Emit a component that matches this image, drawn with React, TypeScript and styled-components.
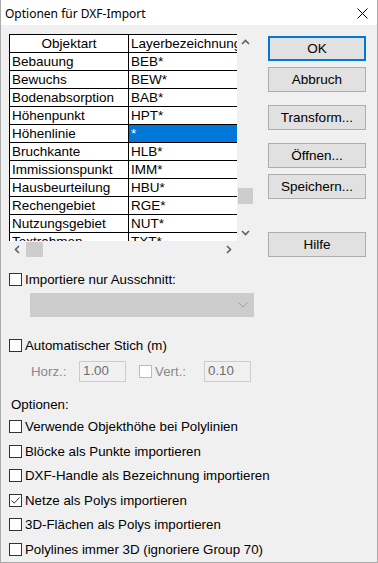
import styled, { createGlobalStyle } from "styled-components";

const Global = createGlobalStyle`
  html, body {
    margin: 0;
    padding: 0;
    background: #ffffff;
  }
  body {
    font-family: "Liberation Sans", Arial, sans-serif;
    font-size: 13.3px;
    color: #000;
  }
`;

const Window = styled.div`
  width: 378px;
  height: 563px;
  box-sizing: border-box;
  background: #f0f0f0;
  border: 1px solid #aaaaaa;
  border-top: none;
  display: flex;
  flex-direction: column;
`;

const TitleBar = styled.div`
  height: 25px;
  box-sizing: border-box;
  background: #fff;
  display: flex;
  align-items: center;
  justify-content: space-between;
  padding: 2px 9px 0 4px;
  font-family: "Noto Sans", "Open Sans", sans-serif;
  font-size: 12px;
`;

const Body = styled.div`
  padding: 9px 0 0 8px;
  display: flex;
  flex-direction: column;
`;

const TopRow = styled.div`
  display: flex;
  align-items: flex-start;
`;

const GridBox = styled.div`
  display: grid;
  grid-template-columns: 228px 17px;
  grid-template-rows: 207px 17px;
  width: 245px;
`;

const Viewport = styled.div`
  background: #fff;
  overflow: hidden;
`;

const Table = styled.div`
  display: grid;
  grid-template-columns: 119px 150px;
  border-top: 1px solid #000;
  border-left: 1px solid #000;
  width: max-content;
`;

const Cell = styled.div<{ $sel?: boolean; $center?: boolean }>`
  height: 18px;
  box-sizing: border-box;
  border-right: 1px solid #000;
  border-bottom: 1px solid #000;
  padding: 0 2px;
  line-height: 17px;
  font-size: 13.5px;
  white-space: nowrap;
  overflow: hidden;
  text-align: ${({ $center }) => ($center ? "center" : "left")};
  background: ${({ $sel }) => ($sel ? "#0078d7" : "#fff")};
  color: ${({ $sel }) => ($sel ? "#fff" : "#000")};
`;

const VScroll = styled.div`
  background: #f0f0f0;
  display: flex;
  flex-direction: column;
`;

const HScroll = styled.div`
  background: #f0f0f0;
  display: flex;
  align-items: stretch;
`;

const Corner = styled.div`
  background: #f0f0f0;
`;

const ArrowBtn = styled.div`
  width: 17px;
  height: 17px;
  flex: none;
  display: flex;
  align-items: center;
  justify-content: center;
`;

const Track = styled.div<{ $offset: number }>`
  flex: 1;
  display: flex;
  flex-direction: column;
  padding-top: ${({ $offset }) => $offset}px;
`;

const VThumb = styled.div`
  width: 15px;
  height: 16px;
  margin-left: 1px;
  background: #cdcdcd;
`;

const HTrack = styled.div`
  flex: 1;
  display: flex;
  align-items: center;
`;

const HThumb = styled.div`
  width: 17px;
  height: 15px;
  background: #cdcdcd;
`;

const ButtonCol = styled.div`
  display: flex;
  flex-direction: column;
  margin: 2px 0 0 14px;
`;

const Button = styled.button<{ $gap?: number; $default?: boolean }>`
  width: 98px;
  height: 25px;
  box-sizing: border-box;
  margin: ${({ $gap }) => $gap ?? 0}px 0 0 0;
  padding: 0;
  background: #e1e1e1;
  border: ${({ $default }) => ($default ? "2px solid #0078d7" : "1px solid #adadad")};
  font-family: "Liberation Sans", Arial, sans-serif;
  font-size: 13.5px;
  color: #000;
`;

const CheckRow = styled.label<{ $top?: number; $disabled?: boolean }>`
  display: flex;
  align-items: center;
  height: 15px;
  margin-top: ${({ $top }) => $top ?? 0}px;
  gap: 3px;
  white-space: nowrap;
  color: ${({ $disabled }) => ($disabled ? "#8a8a8a" : "#000")};
`;

const Box = styled.span<{ $disabled?: boolean }>`
  width: 13px;
  height: 13px;
  box-sizing: border-box;
  border: 1px solid ${({ $disabled }) => ($disabled ? "#bcbcbc" : "#333")};
  background: #fff;
  flex: none;
  display: flex;
  align-items: center;
  justify-content: center;
`;

const Dropdown = styled.div`
  width: 224px;
  height: 24px;
  box-sizing: border-box;
  margin: 6px 0 0 21px;
  background: #cccccc;
  border: 1px solid #cccccc;
  display: flex;
  align-items: center;
  justify-content: flex-end;
  padding-right: 5px;
`;

const StichRow = styled.div`
  display: flex;
  align-items: center;
  margin: 8px 0 0 22px;
  height: 21px;
  color: #8a8a8a;
`;

const Label = styled.span<{ $w: number }>`
  width: ${({ $w }) => $w}px;
  flex: none;
`;

const Edit = styled.div`
  width: 47px;
  height: 21px;
  box-sizing: border-box;
  border: 1px solid #cccccc;
  background: #f0f0f0;
  color: #6d6d6d;
  padding: 1px 0 0 3px;
  line-height: 16px;
`;

const Spacer = styled.span<{ $w: number }>`
  width: ${({ $w }) => $w}px;
  flex: none;
`;

const Heading = styled.div`
  margin: 15px 0 0 2px;
  line-height: 16px;
`;

const OptionList = styled.div`
  display: flex;
  flex-direction: column;
  gap: 9.5px;
  margin-top: 6px;
`;

const rows: [string, string][] = [
  ["Bebauung", "BEB*"],
  ["Bewuchs", "BEW*"],
  ["Bodenabsorption", "BAB*"],
  ["Höhenpunkt", "HPT*"],
  ["Höhenlinie", "*"],
  ["Bruchkante", "HLB*"],
  ["Immissionspunkt", "IMM*"],
  ["Hausbeurteilung", "HBU*"],
  ["Rechengebiet", "RGE*"],
  ["Nutzungsgebiet", "NUT*"],
  ["Textrahmen", "TXT*"],
];

const options: [string, boolean][] = [
  ["Verwende Objekthöhe bei Polylinien", false],
  ["Blöcke als Punkte importieren", false],
  ["DXF-Handle als Bezeichnung importieren", false],
  ["Netze als Polys importieren", true],
  ["3D-Flächen als Polys importieren", false],
  ["Polylines immer 3D (ignoriere Group 70)", false],
];

function Chevron({ dir }: { dir: "up" | "down" | "left" | "right" }) {
  const rot = { up: 0, right: 90, down: 180, left: 270 }[dir];
  return (
    <svg width="9" height="9" viewBox="0 0 9 9">
      <path
        d="M1 6 L4.5 2.5 L8 6"
        fill="none"
        stroke="#606060"
        strokeWidth="1.6"
        transform={`rotate(${rot} 4.5 4.5)`}
      />
    </svg>
  );
}

function Check({ checked, disabled }: { checked?: boolean; disabled?: boolean }) {
  return (
    <Box $disabled={disabled}>
      {checked && (
        <svg width="11" height="11" viewBox="0 0 11 11">
          <path d="M1.5 5.5 L4.2 8.2 L9.5 2.5" fill="none" stroke="#333" strokeWidth="1" />
        </svg>
      )}
    </Box>
  );
}

export default function App() {
  return (
    <>
      <Global />
      <Window>
        <TitleBar>
          <span>Optionen für DXF-Import</span>
          <svg width="11" height="11" viewBox="0 0 11 11">
            <path d="M0.5 0.5 L10.5 10.5 M10.5 0.5 L0.5 10.5" stroke="#000" strokeWidth="1" />
          </svg>
        </TitleBar>
        <Body>
          <TopRow>
            <GridBox>
              <Viewport>
                <Table>
                  <Cell $center>Objektart</Cell>
                  <Cell>Layerbezeichnung</Cell>
                  {rows.flatMap(([a, b]) => [
                    <Cell key={a}>{a}</Cell>,
                    <Cell key={a + "-l"} $sel={a === "Höhenlinie"}>
                      {b}
                    </Cell>,
                  ])}
                </Table>
              </Viewport>
              <VScroll>
                <ArrowBtn>
                  <Chevron dir="up" />
                </ArrowBtn>
                <Track $offset={137}>
                  <VThumb />
                </Track>
                <ArrowBtn>
                  <Chevron dir="down" />
                </ArrowBtn>
              </VScroll>
              <HScroll>
                <ArrowBtn>
                  <Chevron dir="left" />
                </ArrowBtn>
                <HTrack>
                  <HThumb />
                </HTrack>
                <ArrowBtn>
                  <Chevron dir="right" />
                </ArrowBtn>
              </HScroll>
              <Corner />
            </GridBox>
            <ButtonCol>
              <Button $default>OK</Button>
              <Button $gap={6}>Abbruch</Button>
              <Button $gap={13}>Transform...</Button>
              <Button $gap={13}>Öffnen...</Button>
              <Button $gap={6}>Speichern...</Button>
              <Button $gap={33}>Hilfe</Button>
            </ButtonCol>
          </TopRow>

          <CheckRow $top={14}>
            <Check />
            Importiere nur Ausschnitt:
          </CheckRow>
          <Dropdown>
            <svg width="10" height="6" viewBox="0 0 10 6">
              <path d="M0.5 0.5 L5 5 L9.5 0.5" fill="none" stroke="#a0a0a0" strokeWidth="1" />
            </svg>
          </Dropdown>

          <CheckRow $top={21}>
            <Check />
            Automatischer Stich (m)
          </CheckRow>
          <StichRow>
            <Label $w={48}>Horz.:</Label>
            <Edit>1.00</Edit>
            <Spacer $w={13} />
            <CheckRow $disabled>
              <Check disabled />
              <Label $w={49}>Vert.:</Label>
            </CheckRow>
            <Edit>0.10</Edit>
          </StichRow>

          <Heading>Optionen:</Heading>
          <OptionList>
            {options.map(([text, on]) => (
              <CheckRow key={text}>
                <Check checked={on} />
                {text}
              </CheckRow>
            ))}
          </OptionList>
        </Body>
      </Window>
    </>
  );
}
